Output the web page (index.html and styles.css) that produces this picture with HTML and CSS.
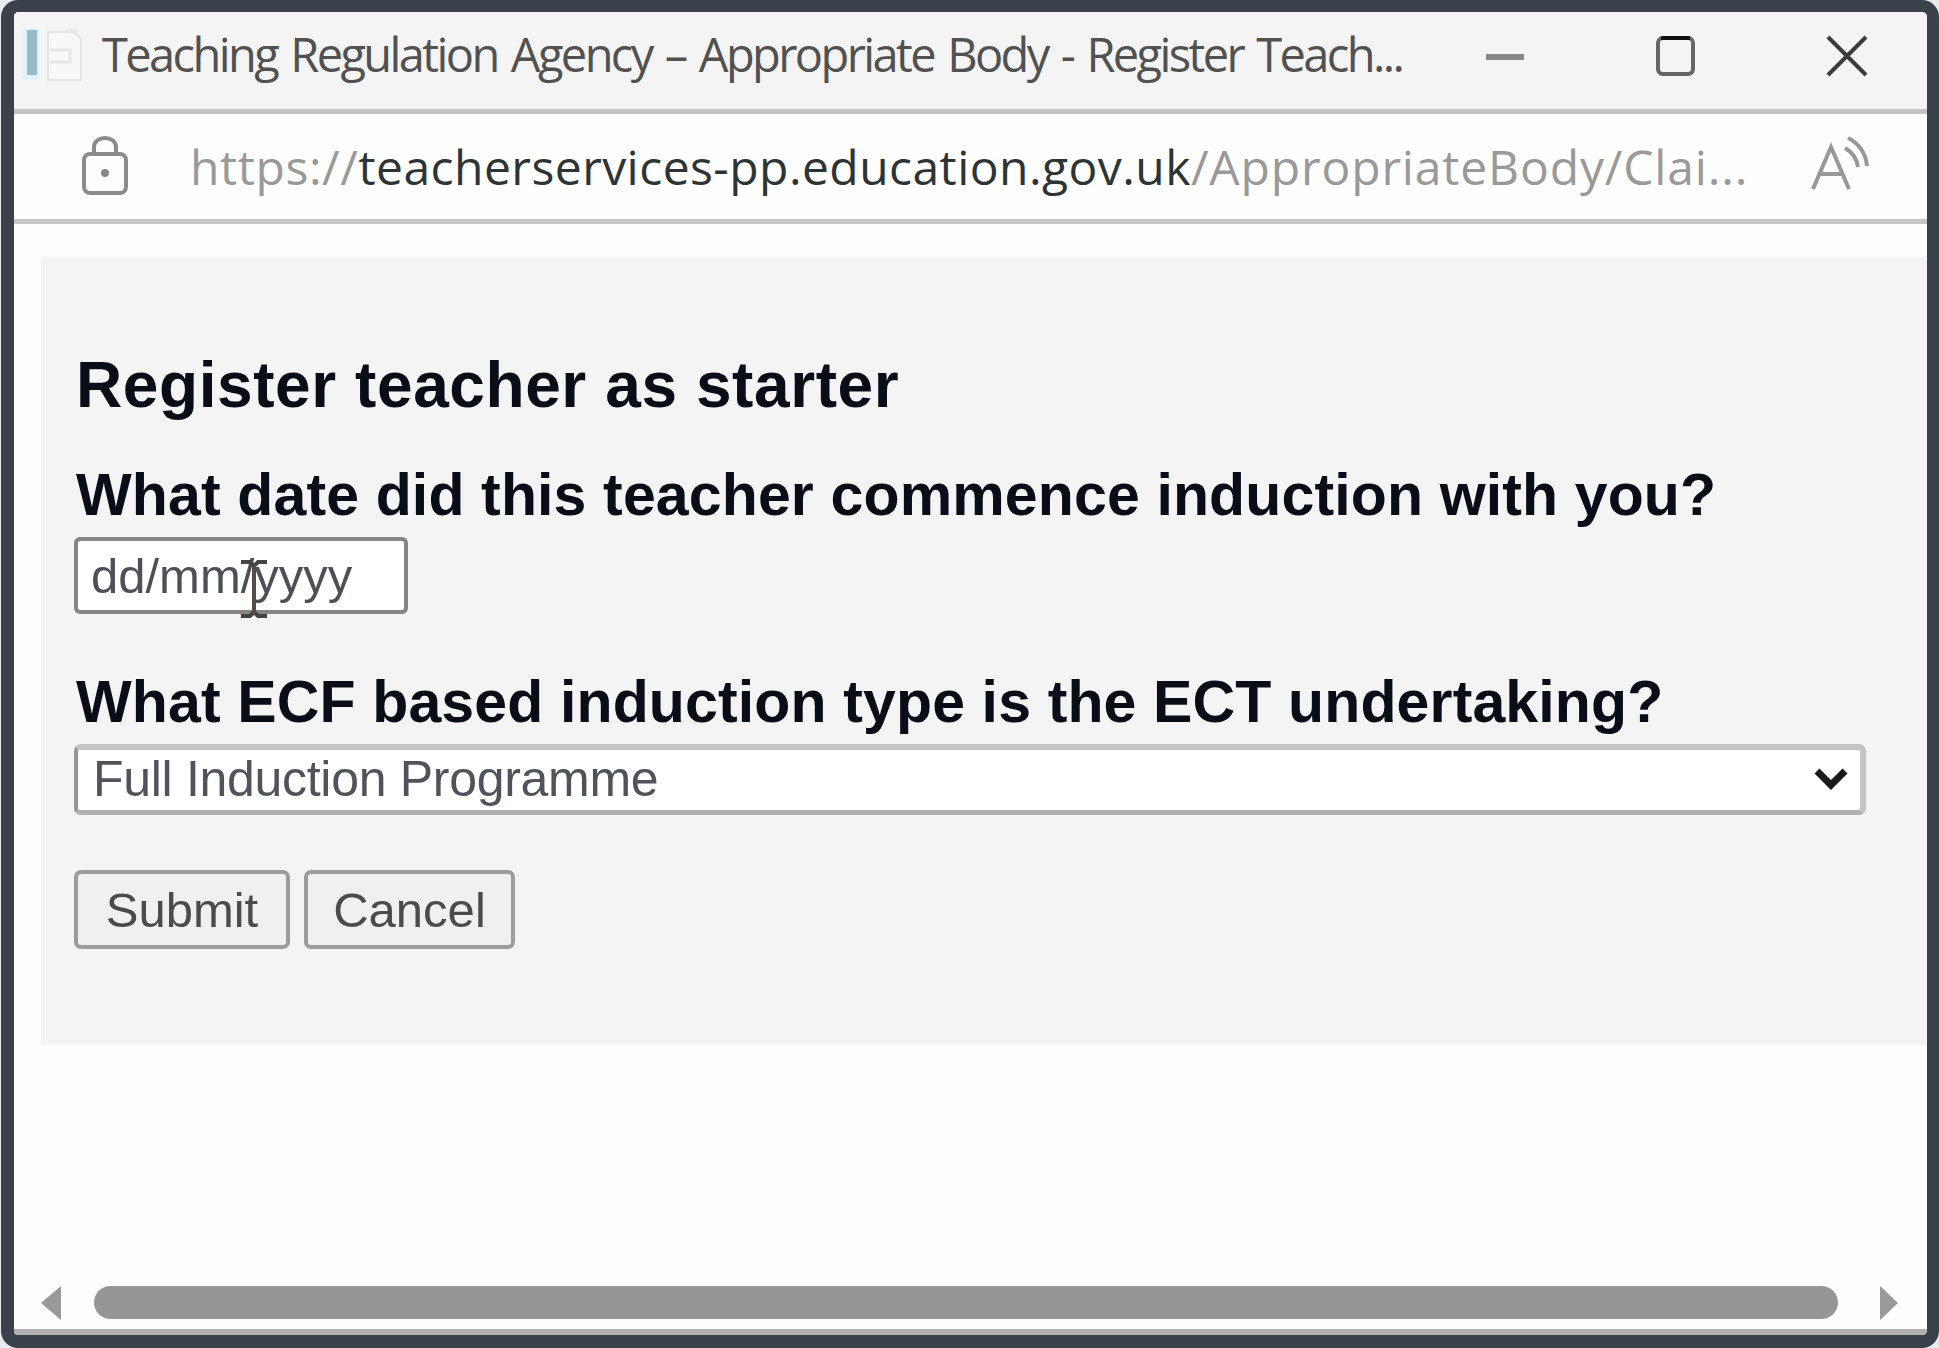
FILE: index.html
```html
<!DOCTYPE html>
<html lang="en">
<head>
<meta charset="utf-8">
<title>Register Teacher</title>
<link rel="stylesheet" href="styles.css">
</head>
<body>
<div class="window">
  <header class="titlebar">
    <svg class="favicon" width="70" height="70" viewBox="0 0 70 70">
      <rect x="8" y="7" width="17" height="52" rx="4" fill="#e0f3fa"/>
      <rect x="13" y="9" width="10" height="45" rx="1" fill="#95bac9"/>
      <path d="M34 11H60L67 18V59H34Z" fill="#f8f8f8" stroke="#e3e3e3" stroke-width="2"/>
      <path d="M36 29H56V41H36M52 10H64" fill="none" stroke="#e6e6e6" stroke-width="3"/>
    </svg>
    <span class="title">Teaching Regulation Agency – Appropriate Body - Register Teach...</span>
    <div class="controls">
      <svg width="44" height="44" viewBox="0 0 44 44"><path d="M3 23H41" stroke="#888" stroke-width="6"/></svg>
      <svg width="44" height="44" viewBox="0 0 44 44"><rect x="4" y="4" width="35" height="36" rx="5" fill="none" stroke="#666" stroke-width="4"/><path d="M7 4H36" stroke="#111" stroke-width="4"/></svg>
      <svg width="44" height="44" viewBox="0 0 44 44"><path d="M3 3L41 41M41 3L3 41" stroke="#3c3c3c" stroke-width="4"/></svg>
    </div>
  </header>
  <div class="address">
    <svg class="lock" width="50" height="62" viewBox="0 0 50 62">
      <path d="M14 19V13C14 1 36 1 36 13V19" fill="none" stroke="#8b8b8b" stroke-width="4"/>
      <rect x="4" y="20" width="42" height="39" rx="6" fill="none" stroke="#8b8b8b" stroke-width="4"/>
      <circle cx="25" cy="39" r="4" fill="#888"/>
    </svg>
    <div class="url"><span class="scheme">https://</span><span class="domain">teacherservices-pp.education.gov.uk</span><span class="path">/AppropriateBody/Clai...</span></div>
    <svg class="read" width="62" height="60" viewBox="0 0 62 60">
      <path d="M3 55L21 13L39 55M9 40H33" fill="none" stroke="#989898" stroke-width="4"/>
      <path d="M35 14C42 18 47 25 48 33M38 4C49 9 56 20 57 32" fill="none" stroke="#989898" stroke-width="4"/>
    </svg>
  </div>
  <main class="page">
    <form class="panel">
      <h1 class="heading">Register teacher as starter</h1>
      <label class="question">What date did this teacher commence induction with you?</label>
      <div class="date"><span>dd/mm/yyyy</span>
        <svg class="caret" width="30" height="62" viewBox="0 0 30 62">
          <path d="M2 4H11L15 8L19 4H28M2 58H11L15 54L19 58H28" fill="none" stroke="#444" stroke-width="4"/>
          <path d="M15 7V56" stroke="#574b49" stroke-width="4"/>
        </svg>
      </div>
      <label class="question second">What ECF based induction type is the ECT undertaking?</label>
      <div class="select"><span>Full Induction Programme</span>
        <svg width="36" height="28" viewBox="0 0 36 28"><path d="M4 5L18 19L32 5" fill="none" stroke="#1a1a1a" stroke-width="7"/></svg>
      </div>
      <div class="actions">
        <button class="btn submit" type="button">Submit</button>
        <button class="btn cancel" type="button">Cancel</button>
      </div>
    </form>
  </main>
  <div class="scrollbar">
    <svg width="20" height="34" viewBox="0 0 20 34"><path d="M20 0V34L0 17Z" fill="#999"/></svg>
    <div class="thumb"></div>
    <svg width="18" height="34" viewBox="0 0 18 34"><path d="M0 0V34L18 17Z" fill="#999"/></svg>
  </div>
</div>
</body>
</html>
```
FILE: styles.css
```css
* { box-sizing: border-box; }
body {
  margin: 0;
  padding-left: 1px;
  height: 1348px;
  overflow: hidden;
  background: #e9ebed;
  font-family: "Liberation Sans", Arial, sans-serif;
}
svg { display: block; flex: none; }
.window {
  display: flex;
  flex-direction: column;
  width: 1938px;
  height: 1348px;
  border: 13px solid #3b414b;
  border-top-width: 12px;
  border-right-width: 12px;
  border-radius: 17px;
  background: #fefefe;
  overflow: hidden;
}
.titlebar {
  display: flex;
  align-items: flex-start;
  height: 102px;
  border-bottom: 5px solid #c3c3c3;
  background: #f4f4f4;
}
.favicon { margin-top: 9px; }
.title {
  width: 1310px;
  margin: 9px 0 0 18px;
  font: 47px/66px "Open Sans", sans-serif;
  letter-spacing: -2.6px;
  word-spacing: 3.5px;
  color: #515151;
  white-space: nowrap;
}
.controls {
  display: flex;
  gap: 127px;
  margin: 22px 0 0 71px;
}
.address {
  display: flex;
  align-items: flex-start;
  height: 110px;
  border-bottom: 5px solid #c6c6c6;
}
.lock { margin: 20px 0 0 66px; }
.url {
  display: flex;
  width: 1566px;
  margin: 20px 0 0 60px;
  font: 48px/66px "Open Sans", sans-serif;
  color: #999;
  white-space: nowrap;
}
.scheme { letter-spacing: 0.6px; }
.domain { color: #2d3436; letter-spacing: 0.45px; }
.path { letter-spacing: 0.85px; }
.read { margin: 20px 0 0 54px; }
.page {
  flex: 1;
  padding: 33px 0 0 27px;
}
.panel {
  display: flex;
  flex-direction: column;
  align-items: flex-start;
  height: 788px;
  padding: 92px 60px 0 33px;
  background: #f4f4f4;
}
.heading, .question {
  font-weight: bold;
  color: #080d17;
  white-space: nowrap;
}
.heading {
  margin: 0 0 0 2px;
  font-size: 64px;
  line-height: 72px;
  letter-spacing: 0.58px;
}
.question {
  margin: 41px 0 0 2px;
  font-size: 59px;
  line-height: 66px;
  letter-spacing: 0.14px;
}
.date {
  position: relative;
  width: 334px;
  height: 77px;
  margin-top: 9px;
  padding: 7px 0 0 13px;
  border: 4px solid #858585;
  border-radius: 6px;
  background: #fff;
  font-size: 49px;
  line-height: 56px;
  color: #4d5157;
}
.caret {
  position: absolute;
  left: 161px;
  top: 17px;
}
.second { margin-top: 55px; }
.select {
  display: flex;
  justify-content: space-between;
  width: 1792px;
  height: 71px;
  margin-top: 9px;
  padding: 1px 11px 0 15px;
  border: 4px solid #959595;
  border-top: 6px solid #c4c4c4;
  border-right: 6px solid #c4c4c4;
  border-bottom: 5px solid #b0b0b0;
  border-radius: 7px;
  background: #fff;
  font-size: 50px;
  line-height: 56px;
  letter-spacing: -0.3px;
  color: #50545a;
}
.select svg { margin-top: 15px; }
.actions {
  display: flex;
  gap: 14px;
  margin-top: 55px;
}
.btn {
  width: 216px;
  height: 79px;
  padding: 0;
  border: 4px solid #9c9c9c;
  border-radius: 7px;
  background: #f1f0f1;
  font: 49px/56px "Liberation Sans", Arial, sans-serif;
  color: #4b4b4d;
}
.cancel { width: 211px; }
.scrollbar {
  display: flex;
  align-items: flex-start;
  height: 50px;
  padding: 1px 0 0 27px;
  border-bottom: 6px solid #b0b0b0;
}
.thumb {
  width: 1744px;
  height: 33px;
  margin: 0 42px 0 33px;
  border-radius: 17px;
  background: #969696;
}
```
